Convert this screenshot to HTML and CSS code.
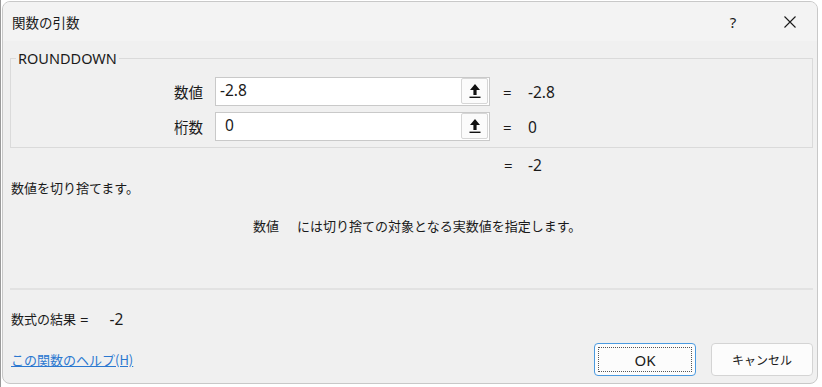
FILE: index.html
```html
<!DOCTYPE html>
<html lang="ja">
<head>
<meta charset="utf-8">
<link rel="stylesheet" href="styles.css">
</head>
<body>
<div class="dialog">
  <div class="titlebar">
    <span class="title">関数の引数</span>
    <span class="help">?</span>
    <span class="close"><svg width="14" height="14" viewBox="0 0 14 14"><path d="M1.5 1.5 L12.5 12.5 M12.5 1.5 L1.5 12.5" stroke="#1a1a1a" stroke-width="1.1" fill="none"/></svg></span>
  </div>
  <div class="content">
    <fieldset class="group">
      <legend>ROUNDDOWN</legend>
      <div class="argrow">
        <span class="label">数値</span>
        <div class="input"><span class="val">-2.8</span><span class="refbtn"><svg width="14" height="16" viewBox="0 0 14 16"><path d="M7 1 L12 7 L8.6 7 L8.6 12 L5.4 12 L5.4 7 L2 7 Z" fill="#111"/><rect x="1.5" y="13.6" width="11" height="1.4" fill="#111"/></svg></span></div>
        <span class="eq">=</span>
        <span class="res">-2.8</span>
      </div>
      <div class="argrow">
        <span class="label">桁数</span>
        <div class="input"><span class="val val2">0</span><span class="refbtn"><svg width="14" height="16" viewBox="0 0 14 16"><path d="M7 1 L12 7 L8.6 7 L8.6 12 L5.4 12 L5.4 7 L2 7 Z" fill="#111"/><rect x="1.5" y="13.6" width="11" height="1.4" fill="#111"/></svg></span></div>
        <span class="eq">=</span>
        <span class="res">0</span>
      </div>
    </fieldset>
    <div class="total"><span class="eq">=</span><span class="res">-2</span></div>
    <p class="summary">数値を切り捨てます。</p>
    <p class="argdesc"><span class="argname">数値</span>には切り捨ての対象となる実数値を指定します。</p>
    <div class="sep"></div>
    <p class="result">数式の結果<span class="reseq">=</span><span class="resval">-2</span></p>
    <div class="footer">
      <a class="helplink" href="#">この関数のヘルプ(H)</a>
      <div class="buttons">
        <button class="btn ok"><span class="focus">OK</span></button>
        <button class="btn cancel">キャンセル</button>
      </div>
    </div>
  </div>
</div>
</body>
</html>
```
FILE: styles.css
```css
html, body {
  margin: 0;
  padding: 0;
}
body {
  width: 822px;
  height: 387px;
  background: #ffffff;
  font-family: "Noto Sans", "Noto Sans CJK JP", sans-serif;
  font-size: 13px;
  color: #1a1a1a;
  overflow: hidden;
  box-sizing: border-box;
  border-left: 1px solid #9a9a9a;
  padding: 1px 0 0 1px;
}
.dialog {
  width: 816px;
  height: 383px;
  box-sizing: border-box;
  border: 1px solid #c8c8c8;
  border-radius: 8px;
  background: #f0f0f0;
  overflow: hidden;
  display: flex;
  flex-direction: column;
}
.titlebar {
  height: 39px;
  flex: none;
  background: #f3f3f3;
  display: flex;
  align-items: center;
  padding-left: 9px;
  font-family: "Noto Sans CJK JP", sans-serif;
}
.title {
  font-size: 13.5px;
  flex: 1;
}
.help {
  font-family: "Noto Sans", sans-serif;
  font-size: 15px;
  width: 20px;
  text-align: center;
  margin-right: 40px;
}
.close {
  display: flex;
  width: 14px;
  margin-right: 20px;
}
.content {
  padding: 0 4px 0 7px;
  display: flex;
  flex-direction: column;
}
.group {
  margin: 9px 0 0 0;
  border: 1px solid #dadada;
  padding: 11px 0 0 0;
  height: 98px;
  box-sizing: border-box;
}
.group legend {
  padding: 0 2px;
  margin-left: 5px;
  font-size: 14.5px;
  line-height: 16px;
  color: #1a1a1a;
}
.argrow {
  display: flex;
  align-items: center;
  height: 29px;
  margin-bottom: 6px;
}
.label {
  width: 192px;
  text-align: right;
  font-family: "Noto Sans CJK JP", sans-serif;
  font-size: 14.5px;
  margin-right: 12px;
}
.input {
  width: 275px;
  height: 29px;
  box-sizing: border-box;
  background: #ffffff;
  border: 1px solid #c9c9c9;
  display: flex;
  align-items: stretch;
  margin-right: 13px;
}
.val {
  flex: 1;
  font-size: 15.5px;
  padding-left: 4px;
  line-height: 24px;
}
.val2 {
  padding-left: 9px;
}
.refbtn {
  width: 25px;
  margin: 0 1px 1px 0;
  border: 1px solid #d6d6d6;
  border-radius: 2px;
  background: #fbfbfb;
  display: flex;
  align-items: center;
  justify-content: center;
}
.eq {
  font-size: 15px;
  width: 10px;
  margin-right: 15px;
}
.res {
  font-size: 15.5px;
}
.total {
  display: flex;
  align-items: center;
  padding-left: 494px;
  margin-top: 8px;
  height: 18px;
}
.total .eq {
  margin-right: 14px;
}
.summary {
  margin: 5px 0 0 1px;
  font-family: "Noto Sans CJK JP", sans-serif;
  line-height: 18px;
}
.argdesc {
  margin: 20px 0 0 243px;
  font-family: "Noto Sans CJK JP", sans-serif;
  line-height: 18px;
}
.argname {
  margin-right: 18px;
}
.sep {
  margin-top: 53px;
  height: 2px;
  background: #e2e2e2;
}
.result {
  margin: 20px 0 0 1px;
  font-family: "Noto Sans CJK JP", sans-serif;
  font-size: 13px;
  line-height: 18px;
  display: flex;
  align-items: center;
}
.reseq {
  font-family: "Noto Sans", sans-serif;
  font-size: 15px;
  margin-left: 4px;
}
.resval {
  font-family: "Noto Sans", sans-serif;
  font-size: 15.5px;
  margin-left: 21px;
}
.footer {
  display: flex;
  align-items: center;
  margin-top: 15px;
}
.helplink {
  flex: 1;
  margin-left: 1px;
  color: #2b78d0;
  font-family: "Noto Sans CJK JP", sans-serif;
  font-size: 13px;
  text-decoration: underline;
}
.buttons {
  display: flex;
  gap: 15px;
}
.btn {
  width: 102px;
  height: 33px;
  box-sizing: border-box;
  border: 1px solid #d4d4d4;
  border-radius: 4px;
  background: #fcfcfc;
  font-family: "Noto Sans", sans-serif;
  font-size: 15px;
  color: #1a1a1a;
  padding: 0;
  display: flex;
  align-items: center;
  justify-content: center;
}
.cancel {
  font-family: "Noto Sans CJK JP", sans-serif;
  font-size: 12px;
}
.ok {
  border-color: #4a9ae0;
  padding: 3px;
}
.focus {
  width: 100%;
  height: 100%;
  box-sizing: border-box;
  border: 1px dotted #555;
  display: flex;
  align-items: center;
  justify-content: center;
}
```
